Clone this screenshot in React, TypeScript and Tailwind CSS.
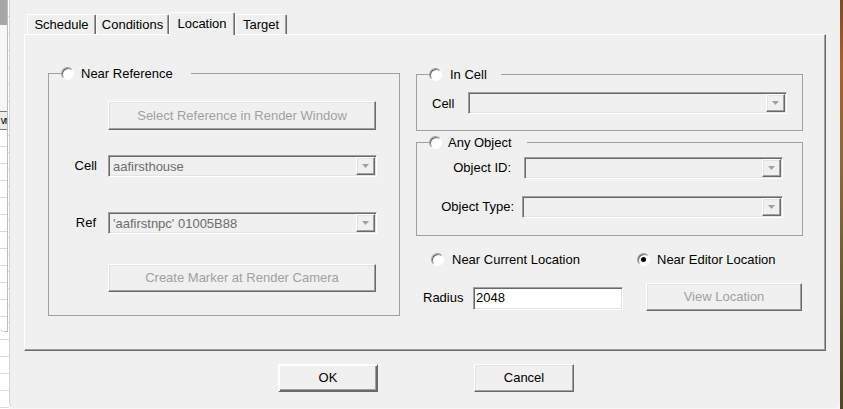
import React from 'react';

const sunken =
  'border border-t-[#a0a0a0] border-l-[#a0a0a0] border-b-white border-r-white shadow-[inset_1px_1px_0_#696969,inset_-1px_-1px_0_#e3e3e3]';
const raised =
  'border border-t-white border-l-white border-b-[#696969] border-r-[#696969] shadow-[inset_-1px_-1px_0_#a0a0a0,inset_1px_1px_0_#e3e3e3]';
const gridLines =
  'bg-[repeating-linear-gradient(to_bottom,#ffffff_0px,#ffffff_16px,#dadada_16px,#dadada_17px)]';

function Radio({ checked = false }: { checked?: boolean }) {
  return (
    <span className="flex h-[13px] w-[13px] shrink-0 items-center justify-center rounded-full border border-t-[#a0a0a0] border-l-[#a0a0a0] border-b-white border-r-white bg-white shadow-[inset_1px_1px_0_#696969]">
      {checked && <span className="h-[5px] w-[5px] rounded-full bg-black" />}
    </span>
  );
}

function Combo({ className = '', value = '' }: { className?: string; value?: string }) {
  return (
    <div className={`flex h-[22px] shrink-0 bg-[#f0f0f0] p-px ${sunken} ${className}`}>
      <div className="flex-1 truncate pl-[3px] leading-[19px] text-[#6d6d6d]">{value}</div>
      <div className={`flex w-[19px] items-center justify-center bg-[#f0f0f0] ${raised}`}>
        <svg width="7" height="4" viewBox="0 0 7 4">
          <path d="M0 0h7L3.5 4z" fill="#a0a0a0" />
        </svg>
      </div>
    </div>
  );
}

function Btn({
  children,
  className = '',
  disabled = false,
}: {
  children: React.ReactNode;
  className?: string;
  disabled?: boolean;
}) {
  return (
    <button
      type="button"
      className={`flex shrink-0 items-center justify-center bg-[#f0f0f0] ${raised} ${
        disabled ? 'text-[#a0a0a0]' : 'text-black'
      } ${className}`}
    >
      {children}
    </button>
  );
}

function GroupLabel({ label, width, gap }: { label: string; width: string; gap: string }) {
  return (
    <legend className={`ml-[12px] h-[15px] ${width}`}>
      <span className={`flex h-[15px] items-center leading-[15px] ${gap}`}>
        <Radio />
        <span>{label}</span>
      </span>
    </legend>
  );
}

function BackWindow() {
  return (
    <div className={`flex h-full w-[9px] shrink-0 flex-col ${gridLines}`}>
      <div className="flex h-[332px] w-[8px] flex-col overflow-hidden rounded-bl-[5px] border-r border-b border-[#bdbdbd] bg-[#f7f7f7]">
        <div className="h-[25px] shrink-0 bg-[#a6a6a6]" />
        <div className="h-[86px] shrink-0" />
        <div className="flex h-[19px] shrink-0 justify-end whitespace-nowrap border-y border-[#7a7a7a] bg-[#ececec] text-[10px] leading-[17px] tracking-[-1px]">
          vr
        </div>
        <div className={`flex-1 ${gridLines}`} />
      </div>
    </div>
  );
}

function Tab({ label, active = false, width }: { label: string; active?: boolean; width: string }) {
  return active ? (
    <div
      className={`relative z-10 flex h-[23px] items-center justify-center rounded-t-[2px] border-l border-t border-white border-r border-r-[#696969] bg-[#f0f0f0] pb-[2px] shadow-[inset_-1px_0_0_#a0a0a0] ${width}`}
    >
      {label}
    </div>
  ) : (
    <div
      className={`mt-[2px] flex h-[20px] items-center justify-center rounded-t-[2px] border-l border-t border-white border-r border-r-[#696969] shadow-[inset_-1px_0_0_#a0a0a0] ${width}`}
    >
      {label}
    </div>
  );
}

export default function App() {
  return (
    <div className="flex h-[409px] w-[843px] overflow-hidden bg-[#f7f7f7] font-['Liberation_Sans',Arial,sans-serif] text-[13px] text-black">
      <BackWindow />
      <div className="flex h-[408px] w-[831px] shrink-0 flex-col rounded-b-[6px] border-l border-[#d4d4d4] bg-[#f0f0f0] pl-[14px] pt-[12px]">
        {/* Tabs */}
        <div className="flex h-[22px] items-start pl-[3px] leading-[15px]">
          <Tab label="Schedule" width="w-[69px]" />
          <Tab label="Conditions" width="w-[73px]" />
          <Tab label="Location" width="w-[66px]" active />
          <Tab label="Target" width="w-[52px]" />
        </div>

        {/* Tab page */}
        <div className="flex h-[317px] w-[802px] items-start border-l border-t border-white border-r border-b border-r-[#696969] border-b-[#696969] pl-[23px] shadow-[inset_-1px_-1px_0_#a0a0a0]">
          {/* Near Reference */}
          <fieldset className="mt-[31px] h-[250px] w-[352px] border border-[#a0a0a0]">
            <GroupLabel label="Near Reference" width="w-[130px]" gap="gap-[7px]" />
            <div className="flex flex-col">
              <Btn disabled className="ml-[59px] mt-[20px] h-[29px] w-[268px]">
                Select Reference in Render Window
              </Btn>
              <div className="mt-[25px] flex items-center">
                <span className="w-[59px] pr-[11px] text-right">Cell</span>
                <Combo className="w-[269px]" value="aafirsthouse" />
              </div>
              <div className="mt-[35px] flex items-center">
                <span className="w-[59px] pr-[12px] text-right">Ref</span>
                <Combo className="w-[269px]" value="'aafirstnpc' 01005B88" />
              </div>
              <Btn disabled className="ml-[59px] mt-[30px] h-[28px] w-[268px]">
                Create Marker at Render Camera
              </Btn>
            </div>
          </fieldset>

          {/* Right column */}
          <div className="ml-[16px] mt-[32px] flex w-[387px] flex-col">
            <fieldset className="h-[64px] w-[387px] border border-[#a0a0a0]">
              <GroupLabel label="In Cell" width="w-[72px]" gap="gap-[8px]" />
              <div className="mt-[10px] flex items-center pl-[15px]">
                <span className="pt-[2px]">Cell</span>
                <Combo className="ml-[14px] w-[319px]" />
              </div>
            </fieldset>

            <fieldset className="mt-[4px] h-[101px] w-[387px] border border-[#a0a0a0]">
              <GroupLabel label="Any Object" width="w-[98px]" gap="gap-[6px]" />
              <div className="mt-[7px] flex items-center">
                <span className="w-[94px] text-right">Object ID:</span>
                <Combo className="ml-[13px] w-[259px]" />
              </div>
              <div className="mt-[17px] flex items-center">
                <span className="w-[97px] text-right">Object Type:</span>
                <Combo className="ml-[8px] w-[261px]" />
              </div>
            </fieldset>

            <div className="mt-[17px] flex h-[13px] items-center pl-[15px] leading-[14px]">
              <div className="flex w-[206px] items-center gap-[8px]">
                <Radio />
                <span>Near Current Location</span>
              </div>
              <div className="flex items-center gap-[7px]">
                <Radio checked />
                <span>Near Editor Location</span>
              </div>
            </div>

            <div className="mt-[17px] flex items-start">
              <span className="mt-[7px] w-[57px] pl-[7px] leading-[15px]">Radius</span>
              <div className={`mt-[4px] h-[23px] w-[150px] bg-white pl-[2px] leading-[20px] ${sunken}`}>
                2048
              </div>
              <Btn disabled className="ml-[23px] h-[28px] w-[156px]">
                View Location
              </Btn>
            </div>
          </div>
        </div>

        {/* Dialog buttons */}
        <div className="mt-[13px] flex">
          <Btn className="ml-[254px] h-[28px] w-[100px] border-[#5a5a5a] shadow-[inset_1px_1px_0_#ffffff,inset_-1px_-1px_0_#696969,inset_-2px_-2px_0_#a0a0a0]">
            OK
          </Btn>
          <Btn className="ml-[96px] h-[28px] w-[100px]">Cancel</Btn>
        </div>
      </div>
      <div className="h-full w-[3px] shrink-0 bg-[linear-gradient(to_bottom,#7a4a28,#a85f2c_15%,#8a6a3c_40%,#6a5c34_70%,#4f4628)]" />
    </div>
  );
}
